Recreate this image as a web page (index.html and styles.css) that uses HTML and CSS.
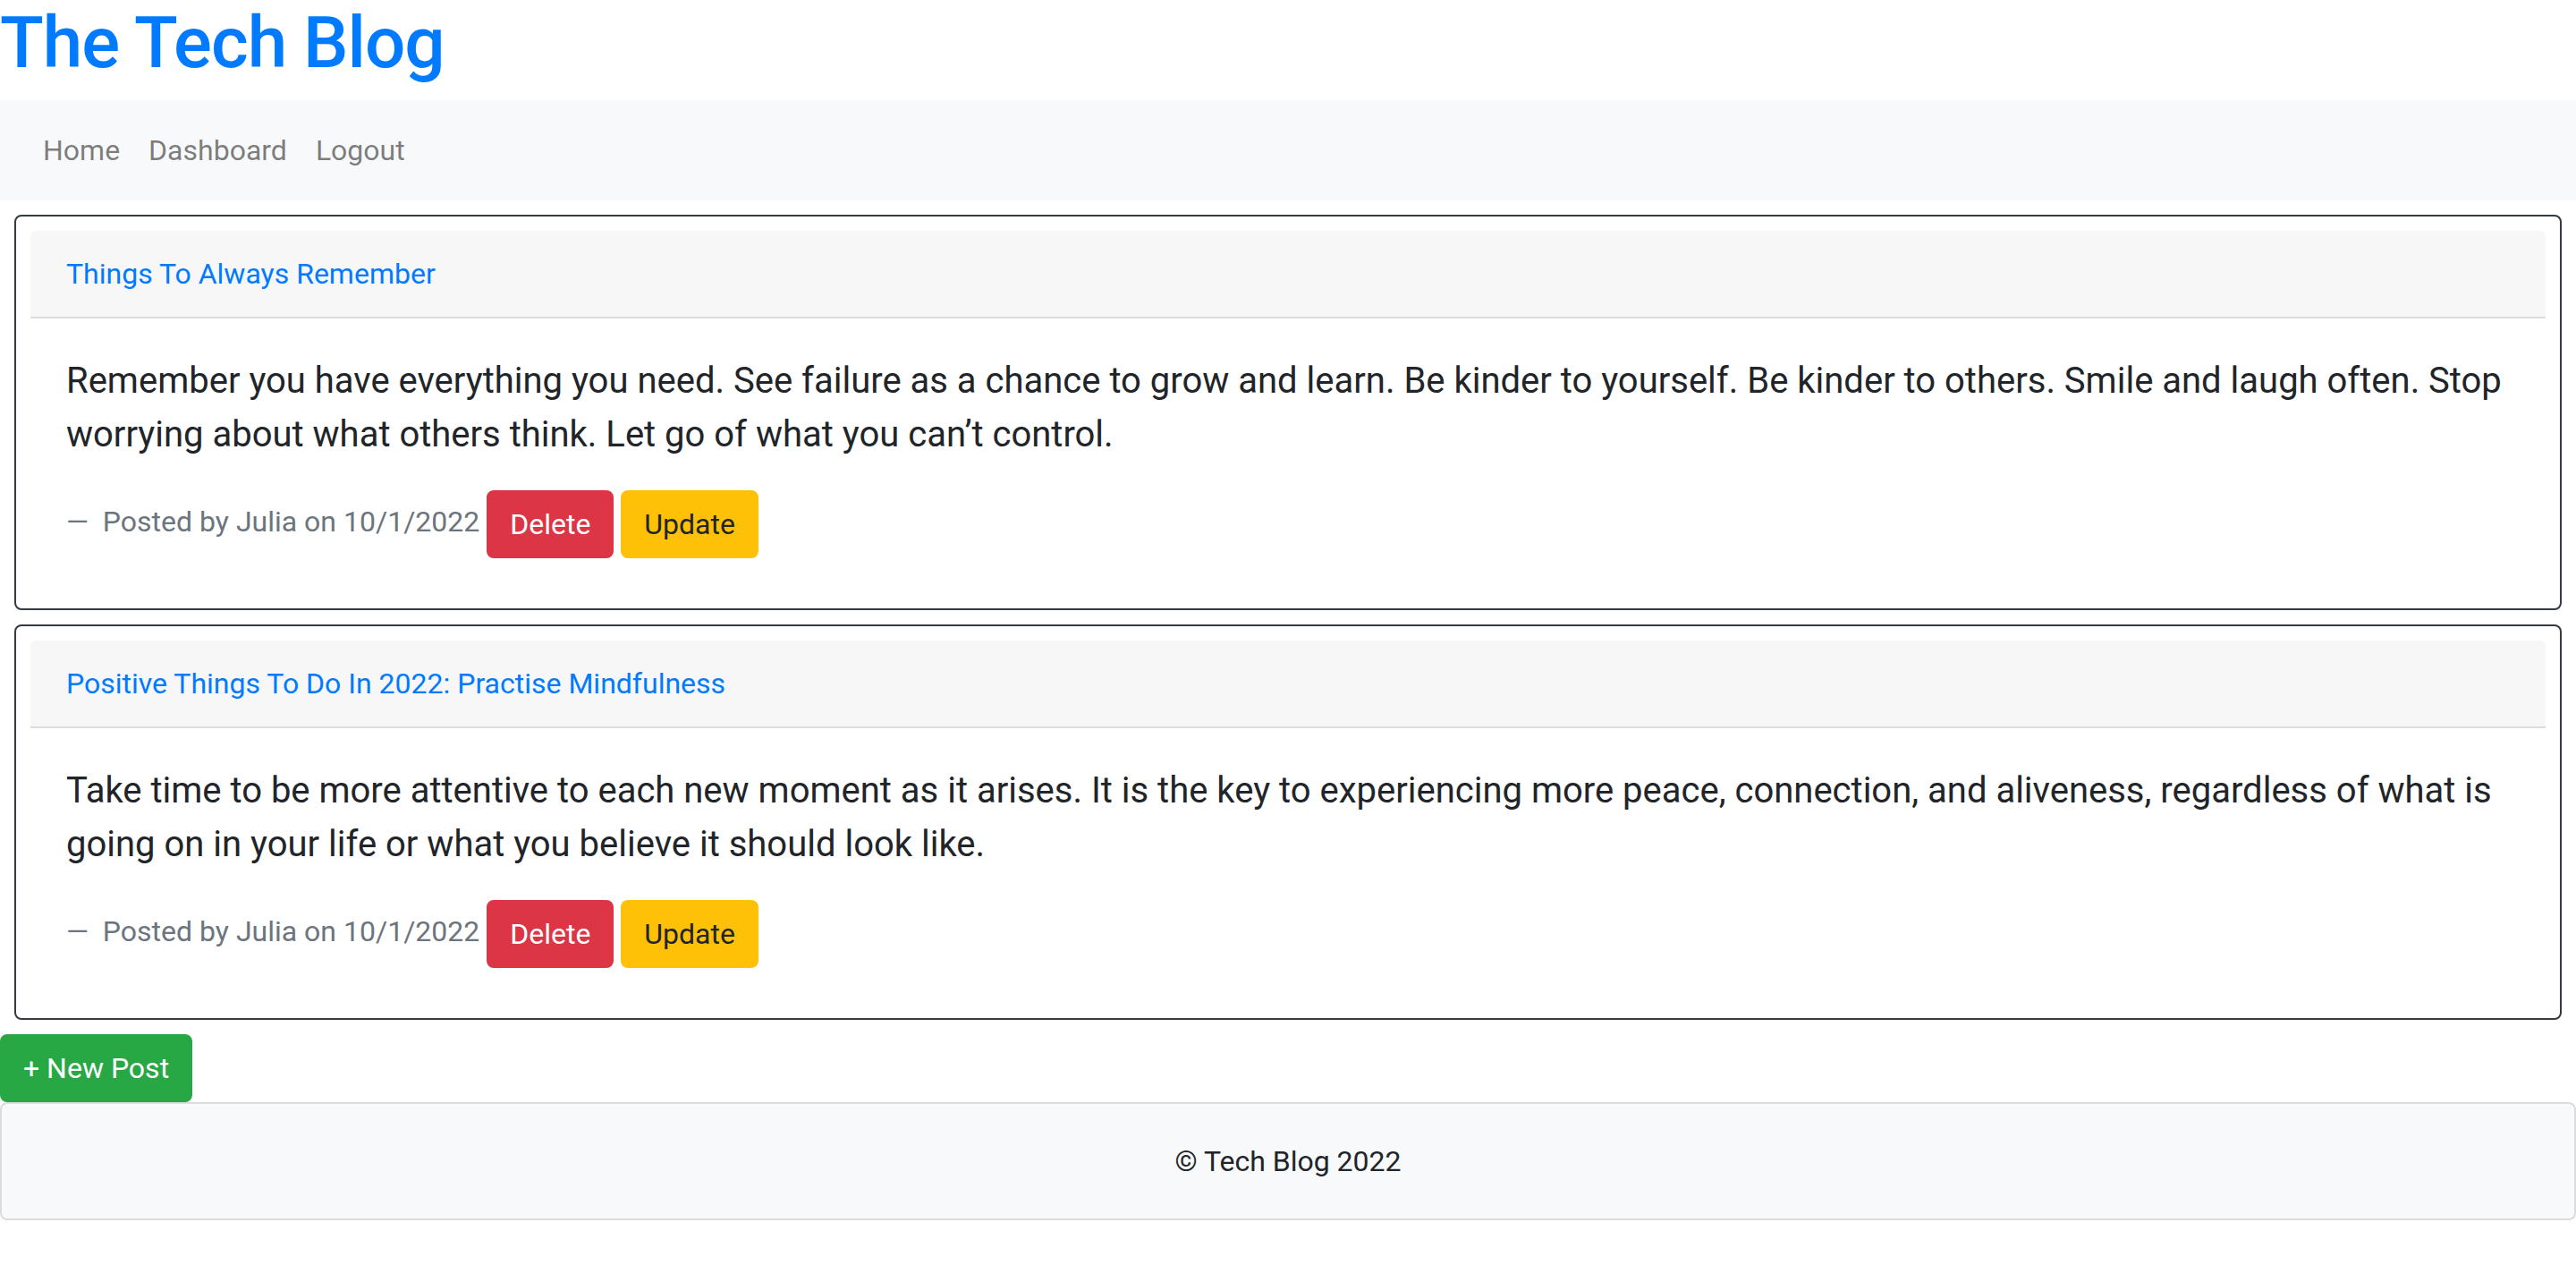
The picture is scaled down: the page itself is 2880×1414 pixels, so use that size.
FILE: index.html
```html
<!DOCTYPE html>
<html lang="en">
<head>
<meta charset="utf-8">
<title>The Tech Blog</title>
<link rel="stylesheet" href="styles.css">
</head>
<body>
<header class="site-header">
  <h1 class="site-title">The Tech Blog</h1>
  <nav class="navbar">
    <a class="nav-link" href="#">Home</a>
    <a class="nav-link" href="#">Dashboard</a>
    <a class="nav-link" href="#">Logout</a>
  </nav>
</header>
<main class="posts">
  <article class="card">
    <div class="card-header"><a class="post-title" href="#">Things To Always Remember</a></div>
    <div class="card-body">
      <p class="post-text">Remember you have everything you need. See failure as a chance to grow and learn. Be kinder to yourself. Be kinder to others. Smile and laugh often. Stop worrying about what others think. Let go of what you can’t control.</p>
      <div class="post-meta"><span class="byline">Posted by Julia on 10/1/2022</span> <button class="btn btn-danger">Delete</button> <button class="btn btn-warning">Update</button></div>
    </div>
  </article>
  <article class="card">
    <div class="card-header"><a class="post-title" href="#">Positive Things To Do In 2022: Practise Mindfulness</a></div>
    <div class="card-body">
      <p class="post-text">Take time to be more attentive to each new moment as it arises. It is the key to experiencing more peace, connection, and aliveness, regardless of what is going on in your life or what you believe it should look like.</p>
      <div class="post-meta"><span class="byline">Posted by Julia on 10/1/2022</span> <button class="btn btn-danger">Delete</button> <button class="btn btn-warning">Update</button></div>
    </div>
  </article>
</main>
<div class="actions"><button class="btn btn-success">+ New Post</button></div>
<footer class="site-footer">
  <div class="footer-body">© Tech Blog 2022</div>
</footer>
</body>
</html>
```

FILE: styles.css
```css
* { box-sizing: border-box; }
html, body {
  margin: 0;
  padding: 0;
  background: #fff;
}
body {
  font-family: Roboto, Inter, "Noto Sans", "Liberation Sans", sans-serif;
  font-size: 32px;
  line-height: 1.5;
  color: #212529;
}
.site-title {
  margin: 0 0 16px 0;
  font-size: 80px;
  font-weight: 500;
  line-height: 1.2;
  color: #007bff;
  letter-spacing: -1px;
}
.navbar {
  display: flex;
  align-items: center;
  background: #f8f9fa;
  padding: 16px 32px;
}
.nav-link {
  display: block;
  padding: 16px 16px;
  color: rgba(0, 0, 0, 0.5);
  text-decoration: none;
  line-height: 48px;
}
.posts {
  display: flex;
  flex-direction: column;
}
.card {
  margin: 16px 16px 0 16px;
  padding: 16px;
  border: 2px solid #343a40;
  border-radius: 8px;
  background: #fff;
}
.card-header {
  padding: 24px 40px;
  background: #f7f7f7;
  border-bottom: 2px solid #dcdcdc;
  border-radius: 6px 6px 0 0;
  line-height: 48px;
}
.post-title {
  color: #007bff;
  text-decoration: none;
}
.card-body {
  padding: 40px;
  font-size: 40px;
}
.post-text {
  margin: 0 0 32px 0;
  line-height: 60px;
}
.post-meta {
  font-size: 32px;
  line-height: 48px;
}
.byline {
  color: #6c757d;
}
.byline::before {
  content: "\2014\00A0\00A0";
}
.btn {
  display: inline-block;
  font-family: inherit;
  font-size: 32px;
  line-height: 48px;
  padding: 12px 24px;
  border: 2px solid transparent;
  border-radius: 8px;
  vertical-align: middle;
  cursor: pointer;
}
.btn-danger {
  background: #dc3545;
  border-color: #dc3545;
  color: #fff;
}
.btn-warning {
  background: #ffc107;
  border-color: #ffc107;
  color: #212529;
}
.btn-success {
  background: #28a745;
  border-color: #28a745;
  color: #fff;
}
.actions {
  margin-top: 16px;
  display: flex;
}
.site-footer {
  background: #f8f9fa;
  border: 2px solid #dcdcdc;
  border-radius: 8px;
}
.footer-body {
  padding: 40px;
  text-align: center;
  line-height: 48px;
}
```
